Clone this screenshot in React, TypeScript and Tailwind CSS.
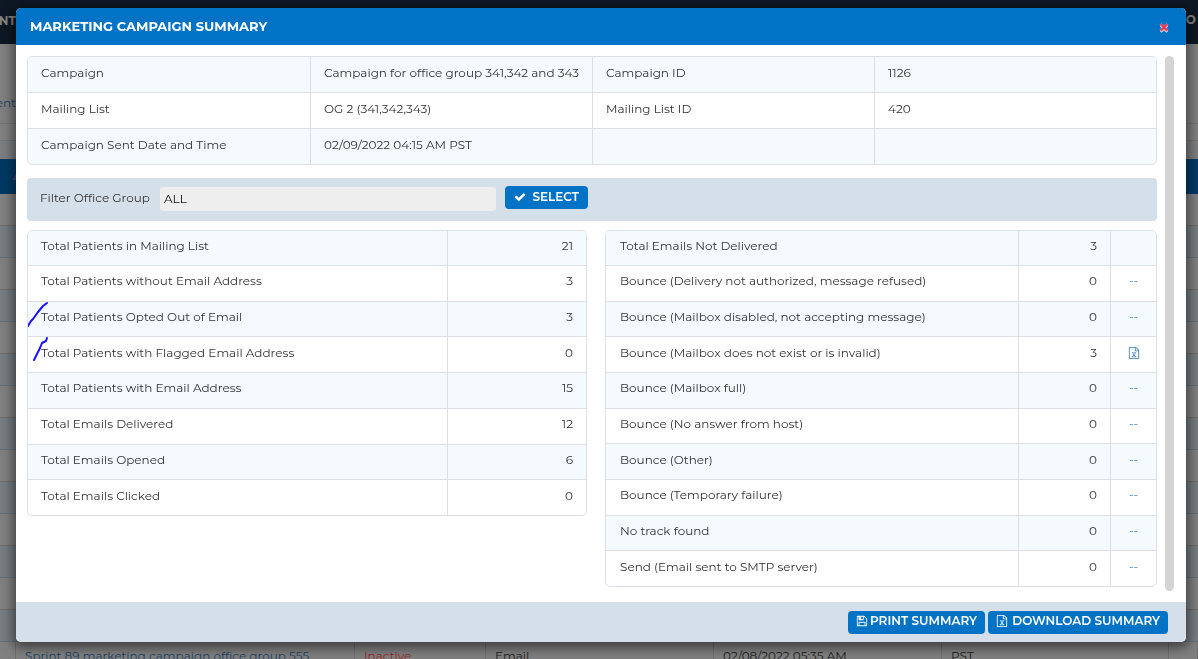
import type { ReactNode } from "react";

const CHECK =
  "M1671 566q0 40-28 68l-724 724-136 136q-28 28-68 28t-68-28l-136-136-362-362q-28-28-28-68t28-68l136-136q28-28 68-28t68 28l294 295 656-657q28-28 68-28t68 28l136 136q28 28 28 68z";
const TIMES =
  "M1490 1322q0 40-28 68l-136 136q-28 28-68 28t-68-28l-294-294-294 294q-28 28-68 28t-68-28l-136-136q-28-28-28-68t28-68l294-294-294-294q-28-28-28-68t28-68l136-136q28-28 68-28t68 28l294 294 294-294q28-28 68-28t68 28l136 136q28 28 28 68t-28 68l-294 294 294 294q28 28 28 68z";
const FLOPPY =
  "M512 1536h768v-384h-768v384zm896 0h128v-896q0-14-10-38.5t-20-34.5l-281-281q-10-10-34-20t-39-10v416q0 40-28 68t-68 28h-576q-40 0-68-28t-28-68v-416h-128v1280h128v-416q0-40 28-68t68-28h832q40 0 68 28t28 68v416zm-384-928v-320q0-13-9.5-22.5t-22.5-9.5h-192q-13 0-22.5 9.5t-9.5 22.5v320q0 13 9.5 22.5t22.5 9.5h192q13 0 22.5-9.5t9.5-22.5zm640 32v928q0 40-28 68t-68 28h-1344q-40 0-68-28t-28-68v-1344q0-40 28-68t68-28h928q40 0 88 20t76 48l280 280q28 28 48 76t20 88z";
const EXCEL =
  "M1596 380q28 28 48 76t20 88v1152q0 40-28 68t-68 28h-1344q-40 0-68-28t-28-68v-1600q0-40 28-68t68-28h896q40 0 88 20t76 48zm-444-244v376h376q-10-29-22-41l-313-313q-12-12-41-22zm384 1528v-1024h-416q-40 0-68-28t-28-68v-416h-768v1536h1280zm-979-234v106h281v-106h-75l103-161q5-7 10-16.5t7.5-13.5 3.5-4h2q1 4 5 10 2 4 4.5 7.5t6 8 6.5 8.5l107 161h-76v106h291v-106h-68l-192-273 195-282h67v-107h-279v107h74l-103 159q-4 7-10 16.5t-9 13.5l-2 3h-2q-1-4-5-10-6-11-17-23l-106-159h76v-107h-290v107h68l189 272-194 283h-68z";

function Glyph({ d, className }: { d: string; className: string }) {
  return (
    <svg viewBox="0 0 1792 1792" fill="currentColor" className={className} aria-hidden="true">
      <path d={d} />
    </svg>
  );
}

const details = [
  ["Campaign", "Campaign for office group 341,342 and 343", "Campaign ID", "1126"],
  ["Mailing List", "OG 2 (341,342,343)", "Mailing List ID", "420"],
  ["Campaign Sent Date and Time", "02/09/2022 04:15 AM PST", "", ""],
];

const totals: { label: string; value: number; mark?: string }[] = [
  { label: "Total Patients in Mailing List", value: 21 },
  { label: "Total Patients without Email Address", value: 3 },
  { label: "Total Patients Opted Out of Email", value: 3, mark: "M0 24 L3 19 L5 17 L10 10 L15 4 L19 1" },
  { label: "Total Patients with Flagged Email Address", value: 0, mark: "M6 23 L12 11 L14 6 L18 4 L19 1" },
  { label: "Total Patients with Email Address", value: 15 },
  { label: "Total Emails Delivered", value: 12 },
  { label: "Total Emails Opened", value: 6 },
  { label: "Total Emails Clicked", value: 0 },
];

const failures: { label: string; value: number; action: "none" | "dash" | "file" }[] = [
  { label: "Total Emails Not Delivered", value: 3, action: "none" },
  { label: "Bounce (Delivery not authorized, message refused)", value: 0, action: "dash" },
  { label: "Bounce (Mailbox disabled, not accepting message)", value: 0, action: "dash" },
  { label: "Bounce (Mailbox does not exist or is invalid)", value: 3, action: "file" },
  { label: "Bounce (Mailbox full)", value: 0, action: "dash" },
  { label: "Bounce (No answer from host)", value: 0, action: "dash" },
  { label: "Bounce (Other)", value: 0, action: "dash" },
  { label: "Bounce (Temporary failure)", value: 0, action: "dash" },
  { label: "No track found", value: 0, action: "dash" },
  { label: "Send (Email sent to SMTP server)", value: 0, action: "dash" },
];

const rowClass =
  "odd:bg-[#f4faff] [&:not(:first-child)>*]:border-t [&>*:not(:first-child)]:border-l [&>*]:border-[#dcdfe9]";

function TableFrame({ children }: { children: ReactNode }) {
  return <div className="overflow-hidden rounded-[5px] border border-[#dcdfe9]">{children}</div>;
}

function BackgroundPage() {
  return (
    <div className="h-screen overflow-hidden bg-[#808080] text-[#1c1c1c]">
      <header className="flex h-11 items-center justify-between bg-[#0e1824] font-bold text-[#858585]">
        <span className="flex w-4 justify-end overflow-hidden pb-0.5">PATIENT</span>
        <span className="pr-0.5 pb-1">GO</span>
      </header>
      <div className="flex h-20 items-end border-b border-[#747474] pb-3 text-[#1f4363]">
        <span className="flex w-4 justify-end overflow-hidden">Patient</span>
      </div>
      <div className="h-[17px] border-b border-[#747474]" />
      <div className="h-[18px] bg-[#7c7e80]" />
      <table className="w-full table-fixed border-separate border-spacing-0">
        <colgroup>
          <col className="w-4" />
          <col className="w-[339px]" />
          <col className="w-[131px]" />
          <col className="w-[228px]" />
          <col className="w-[228px]" />
          <col className="w-[227px]" />
          <col />
        </colgroup>
        <thead>
          <tr className="h-[35px] bg-[#003a66]">
            <th colSpan={7} className="p-0 text-left">
              <svg viewBox="0 0 16 8" className="h-2 w-4" aria-hidden="true">
                <path d="M12 7 L16 1 V7 Z" fill="#4d4688" />
              </svg>
            </th>
          </tr>
        </thead>
        <tbody>
          {Array.from({ length: 14 }, (_, i) => (
            <tr key={i} className="h-8 even:bg-[#767c81]">
              <td colSpan={7} className="border-b border-[#6c6e71] p-0" />
            </tr>
          ))}
          <tr className="h-8 [&>td]:border-r [&>td]:border-[#6f6f6f] [&>td]:p-0 [&>td]:pb-1 [&>td]:pl-[9px]">
            <td />
            <td>
              <a href="#campaign" className="text-[#1f4363]">
                Sprint 89 marketing campaign office group 555
              </a>
            </td>
            <td className="text-[#982828]">Inactive</td>
            <td>Email</td>
            <td>02/08/2022 05:35 AM</td>
            <td>PST</td>
            <td />
          </tr>
        </tbody>
      </table>
    </div>
  );
}

export default function App() {
  return (
    <div className="font-[Montserrat,'Open_Sans',sans-serif] text-xs leading-4 text-[#333]">
      <BackgroundPage />
      <div className="fixed inset-0 pt-2 pr-3 pl-4">
        <section
          role="dialog"
          aria-label="Marketing campaign summary"
          className="overflow-hidden rounded-[5px] bg-white shadow-[0_3px_12px_3px_rgba(0,0,0,0.5)]"
        >
          <header className="flex h-[37px] items-center justify-between bg-[#0073c6] pr-4 pl-3.5 text-white">
            <h1 className="pb-0.5 text-[13px] font-bold">MARKETING CAMPAIGN SUMMARY</h1>
            <button type="button" aria-label="Close" className="p-0">
              <svg viewBox="0 0 1792 1792" className="size-3" aria-hidden="true">
                <path d={TIMES} fill="#fff" transform="translate(0 150)" />
                <path d={TIMES} fill="#ea3556" stroke="#f6b9c9" strokeWidth="60" />
              </svg>
            </button>
          </header>

          <div className="flex gap-2 pt-[11px] pr-3 pb-[11px] pl-[11px]">
            <div className="min-w-0 flex-1 pb-1">
              <TableFrame>
                <table className="w-full table-fixed border-separate border-spacing-0">
                  <tbody>
                    {details.map((row) => (
                      <tr key={row[0]} className={`h-9 first:h-[35px] ${rowClass}`}>
                        {row.map((cell, i) => (
                          <td key={i} className="p-0 pb-1 pl-[13px] whitespace-nowrap">
                            {cell}
                          </td>
                        ))}
                      </tr>
                    ))}
                  </tbody>
                </table>
              </TableFrame>

              <form
                className="mt-[13px] flex h-[43px] items-center rounded-[4px] bg-[#d5dfe9] pl-[13px]"
                onSubmit={(e) => e.preventDefault()}
              >
                <label htmlFor="office-group" className="w-[120px] pb-1 whitespace-nowrap">
                  Filter Office Group
                </label>
                <input
                  id="office-group"
                  defaultValue="ALL"
                  readOnly
                  className="mb-0.5 h-6 w-[336px] rounded-[3px] bg-[#eee] px-1 text-[#111] outline-none"
                />
                <button
                  type="submit"
                  className="mb-1 ml-[9px] flex h-[23px] w-[83px] items-center justify-between rounded-[4px] bg-[#0073c6] px-[9px] pb-0.5 font-semibold text-white"
                >
                  <Glyph d={CHECK} className="size-3" />
                  SELECT
                </button>
              </form>

              <div className="mt-[9px] grid grid-cols-[560fr_552fr] items-start gap-[18px]">
                <TableFrame>
                  <table className="h-[284px] w-full table-fixed border-separate border-spacing-0">
                    <colgroup>
                      <col className="w-3/4" />
                      <col />
                    </colgroup>
                    <tbody>
                      {totals.map(({ label, value, mark }) => (
                        <tr key={label} className={rowClass}>
                          <td className="relative p-0 pb-1 pl-[13px]">
                            {label}
                            {mark && (
                              <svg
                                viewBox="0 0 24 28"
                                className="absolute top-0 left-0 h-7 w-6 overflow-visible"
                                fill="none"
                                stroke="#1a12ff"
                                strokeWidth="2"
                                strokeLinecap="round"
                                strokeLinejoin="round"
                                aria-hidden="true"
                              >
                                <path d={mark} />
                              </svg>
                            )}
                          </td>
                          <td className="p-0 pr-[13px] pb-1 text-right">{value}</td>
                        </tr>
                      ))}
                    </tbody>
                  </table>
                </TableFrame>

                <TableFrame>
                  <table className="h-[355px] w-full table-fixed border-separate border-spacing-0">
                    <colgroup>
                      <col />
                      <col className="w-[92px]" />
                      <col className="w-[46px]" />
                    </colgroup>
                    <tbody>
                      {failures.map(({ label, value, action }) => (
                        <tr key={label} className={rowClass}>
                          <td className="p-0 pb-1 pl-[14px] whitespace-nowrap">{label}</td>
                          <td className="p-0 pr-[13px] pb-1 text-right">{value}</td>
                          <td className="p-0 pb-1 text-center text-[#3f7fb5]">
                            {action === "dash" && "--"}
                            {action === "file" && (
                              <button type="button" aria-label="Download list" className="align-middle">
                                <Glyph d={EXCEL} className="size-3" />
                              </button>
                            )}
                          </td>
                        </tr>
                      ))}
                    </tbody>
                  </table>
                </TableFrame>
              </div>
            </div>
            <div className="w-[9px] rounded-full bg-[#d4d4d4]" />
          </div>

          <footer className="flex h-10 items-center justify-end gap-[3px] bg-[#d5dfe9] pr-[18px] font-semibold text-white">
            <button
              type="button"
              className="flex h-[23px] w-[137px] items-center justify-between rounded-[4px] bg-[#0073c6] px-2 pb-0.5 whitespace-nowrap"
            >
              <Glyph d={FLOPPY} className="size-3" />
              PRINT SUMMARY
            </button>
            <button
              type="button"
              className="flex h-[23px] w-[180px] items-center justify-between rounded-[4px] bg-[#0073c6] px-2 pb-0.5 whitespace-nowrap"
            >
              <Glyph d={EXCEL} className="size-3" />
              DOWNLOAD SUMMARY
            </button>
          </footer>
        </section>
      </div>
    </div>
  );
}
